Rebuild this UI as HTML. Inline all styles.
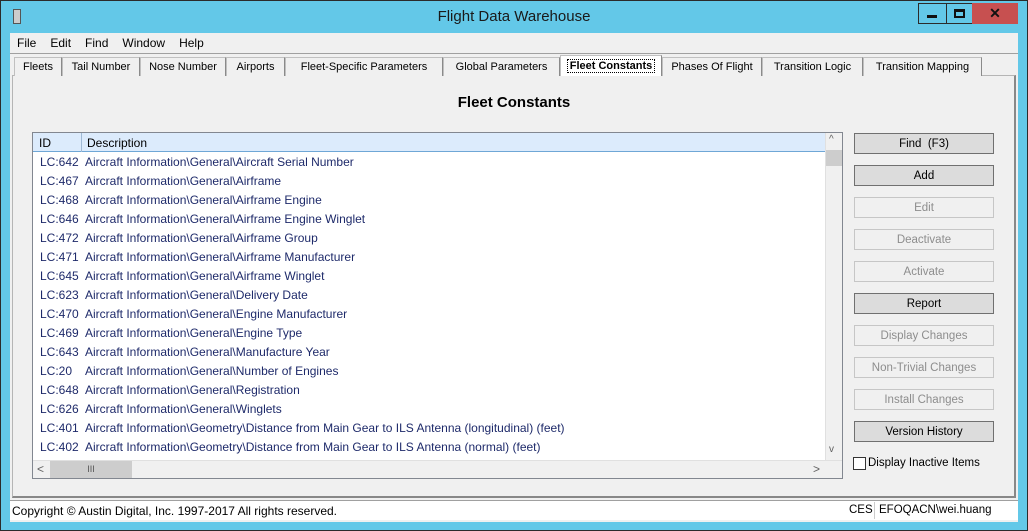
<!DOCTYPE html>
<html><head><style>
*{margin:0;padding:0;box-sizing:border-box}
body{width:1028px;height:531px;background:#2b2b2b;position:relative;overflow:hidden;font-family:"Liberation Sans",sans-serif;font-size:12px;color:#000}
.a{position:absolute}
.win{left:1px;top:1px;width:1026px;height:529px;background:#63c8e8}
.title{left:0;top:8px;width:1028px;text-align:center;font-size:15px;color:#1a1a1a}
.client{left:10px;top:33px;width:1008px;height:489px;background:#f0f0f0}
.menu span{margin-right:14px}
.tab{top:57px;height:19px;border:1px solid #c0c0c0;border-bottom:none;background:#f0f0f0;text-align:center;line-height:19px;font-size:11px;border-right:1px solid #8a8a8a}
.panel{left:12px;top:75px;width:1004px;height:423px;border:1px solid #b5b5b5;border-right:2px solid #888;border-bottom:2px solid #888}
.list{left:32px;top:132px;width:811px;height:347px;background:#fff;border:1px solid #828790}
.row{position:absolute;left:7px;height:19px;line-height:21px;color:#1e2a6a;white-space:nowrap}
.row b{font-weight:normal;display:inline-block;width:45px}
.btn{left:854px;width:140px;height:21px;border:1px solid #adadad;background:#e1e1e1;text-align:center;line-height:20px;font-size:11.5px}
.btn.on{border-color:#707070;background:#dcdcdc}
.btn.off{color:#8d8d8d;background:#f0f0f0;border-color:#c6c6c6}
</style></head><body>
<div class="a win"></div>
<div class="a" style="left:13px;top:9px;width:8px;height:15px;border:1px solid #555;background:#ccc"></div>
<div class="a title">Flight Data Warehouse</div>
<div class="a" style="left:918px;top:3px;width:81px;height:21px;border:1px solid #2b2b2b;border-right:none;background:#63c8e8"></div>
<div class="a" style="left:946px;top:3px;width:1px;height:21px;background:#2b2b2b"></div>
<div class="a" style="left:972px;top:3px;width:1px;height:21px;background:#2b2b2b"></div>
<div class="a" style="left:927px;top:15px;width:10px;height:3px;background:#111"></div>
<div class="a" style="left:954px;top:9px;width:11px;height:9px;border:2px solid #111;border-top-width:3px"></div>
<div class="a" style="left:972px;top:3px;width:46px;height:21px;background:#c75050;color:#111;text-align:center;font-weight:bold;font-size:14px;line-height:20px">✕</div>
<div class="a client"></div>
<div class="a menu" style="left:17px;top:36px;font-size:12px"><span>File</span><span>Edit</span><span>Find</span><span>Window</span><span>Help</span></div>
<div class="a" style="left:10px;top:53px;width:1008px;height:1px;background:#a0a0a0"></div>
<div class="a panel"></div>
<div class="a tab" style="left:14px;width:48px">Fleets</div>
<div class="a tab" style="left:62px;width:78px">Tail Number</div>
<div class="a tab" style="left:140px;width:86px">Nose Number</div>
<div class="a tab" style="left:226px;width:59px">Airports</div>
<div class="a tab" style="left:285px;width:158px">Fleet-Specific Parameters</div>
<div class="a tab" style="left:443px;width:117px">Global Parameters</div>
<div class="a tab" style="left:560px;top:55px;height:21px;width:102px;font-weight:bold;background:#fff;border-bottom:none;line-height:20px"><span style="border:1px dotted #000;padding:0 2px">Fleet Constants</span></div>
<div class="a tab" style="left:662px;width:100px">Phases Of Flight</div>
<div class="a tab" style="left:762px;width:101px">Transition Logic</div>
<div class="a tab" style="left:863px;width:119px">Transition Mapping</div>
<div class="a" style="left:0;top:94px;width:1028px;text-align:center;font-size:15px;font-weight:bold">Fleet Constants</div>
<div class="a list">
<div class="a" style="left:0;top:0;width:792px;height:19px;background:#dcebfc;border-bottom:1px solid #6fa7d6"></div>
<div class="a" style="left:48px;top:0;width:1px;height:19px;background:#9fb9d5"></div>
<div class="a" style="left:6px;top:3px">ID</div>
<div class="a" style="left:54px;top:3px">Description</div>
<div class="row" style="top:19px"><b>LC:642</b>Aircraft Information\General\Aircraft Serial Number</div>
<div class="row" style="top:38px"><b>LC:467</b>Aircraft Information\General\Airframe</div>
<div class="row" style="top:57px"><b>LC:468</b>Aircraft Information\General\Airframe Engine</div>
<div class="row" style="top:76px"><b>LC:646</b>Aircraft Information\General\Airframe Engine Winglet</div>
<div class="row" style="top:95px"><b>LC:472</b>Aircraft Information\General\Airframe Group</div>
<div class="row" style="top:114px"><b>LC:471</b>Aircraft Information\General\Airframe Manufacturer</div>
<div class="row" style="top:133px"><b>LC:645</b>Aircraft Information\General\Airframe Winglet</div>
<div class="row" style="top:152px"><b>LC:623</b>Aircraft Information\General\Delivery Date</div>
<div class="row" style="top:171px"><b>LC:470</b>Aircraft Information\General\Engine Manufacturer</div>
<div class="row" style="top:190px"><b>LC:469</b>Aircraft Information\General\Engine Type</div>
<div class="row" style="top:209px"><b>LC:643</b>Aircraft Information\General\Manufacture Year</div>
<div class="row" style="top:228px"><b>LC:20</b>Aircraft Information\General\Number of Engines</div>
<div class="row" style="top:247px"><b>LC:648</b>Aircraft Information\General\Registration</div>
<div class="row" style="top:266px"><b>LC:626</b>Aircraft Information\General\Winglets</div>
<div class="row" style="top:285px"><b>LC:401</b>Aircraft Information\Geometry\Distance from Main Gear to ILS Antenna (longitudinal) (feet)</div>
<div class="row" style="top:304px"><b>LC:402</b>Aircraft Information\Geometry\Distance from Main Gear to ILS Antenna (normal) (feet)</div>
<div class="a" style="left:792px;top:0;width:17px;height:327px;background:#f0f0f0;border-left:1px solid #e0e0e0"></div>
<div class="a" style="left:793px;top:17px;width:16px;height:16px;background:#cdcdcd"></div>
<div class="a" style="left:796px;top:1px;font-size:10px;color:#606060">^</div>
<div class="a" style="left:796px;top:311px;font-size:10px;color:#606060">v</div>
<div class="a" style="left:0;top:327px;width:809px;height:18px;background:#f0f0f0;border-top:1px solid #e0e0e0"></div>
<div class="a" style="left:17px;top:328px;width:82px;height:17px;background:#cdcdcd;text-align:center;line-height:16px;font-size:9px;color:#555">III</div>
<div class="a" style="left:4px;top:329px;color:#606060">&lt;</div>
<div class="a" style="left:780px;top:329px;color:#606060">&gt;</div>
</div>
<div class="a btn on" style="top:133px">Find&nbsp; (F3)</div>
<div class="a btn on" style="top:165px">Add</div>
<div class="a btn off" style="top:197px">Edit</div>
<div class="a btn off" style="top:229px">Deactivate</div>
<div class="a btn off" style="top:261px">Activate</div>
<div class="a btn on" style="top:293px">Report</div>
<div class="a btn off" style="top:325px">Display Changes</div>
<div class="a btn off" style="top:357px">Non-Trivial Changes</div>
<div class="a btn off" style="top:389px">Install Changes</div>
<div class="a btn on" style="top:421px">Version History</div>
<div class="a" style="left:853px;top:457px;width:13px;height:13px;border:1px solid #333;background:#fff"></div>
<div class="a" style="left:868px;top:457px;font-size:11.5px">Display Inactive Items</div>
<div class="a" style="left:10px;top:500px;width:1008px;height:20px;background:#fff;border-top:1px solid #a0a0a0"></div>
<div class="a" style="left:12px;top:504px">Copyright © Austin Digital, Inc. 1997-2017 All rights reserved.</div>
<div class="a" style="left:849px;top:504px;font-size:11.5px">CES</div>
<div class="a" style="left:874px;top:502px;width:1px;height:17px;background:#ccc"></div>
<div class="a" style="left:879px;top:504px;font-size:11.5px">EFOQACN\wei.huang</div>
</body></html>
